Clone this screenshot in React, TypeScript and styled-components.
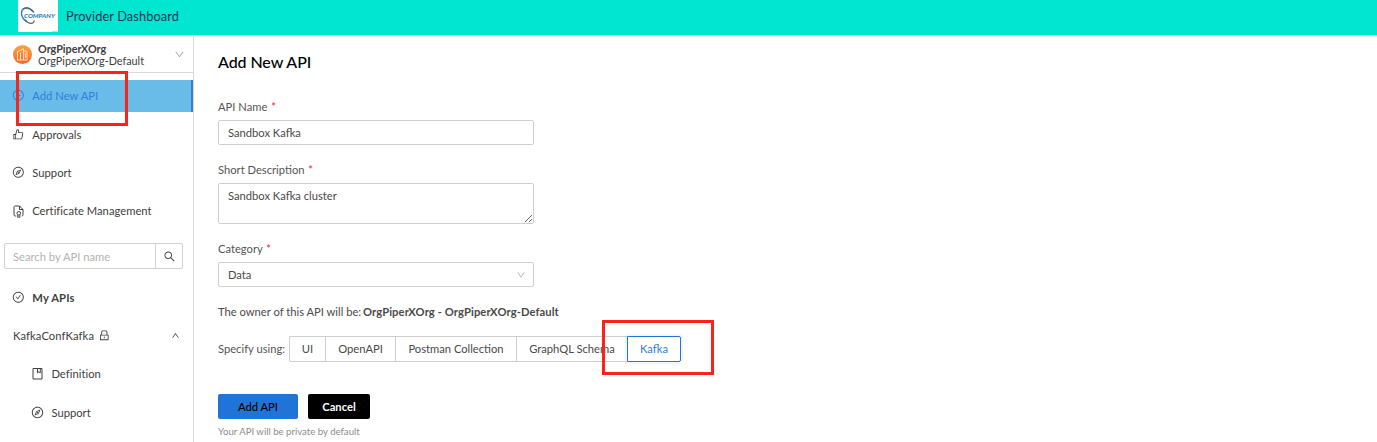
import React from "react";
import styled, { createGlobalStyle, css } from "styled-components";
import {
  AiOutlinePlusCircle,
  AiOutlineLike,
  AiOutlineCompass,
  AiOutlineCheckCircle,
  AiOutlineLock,
  AiOutlineSearch,
  AiOutlineUp,
  AiOutlineDown,
} from "react-icons/ai";

const GlobalStyle = createGlobalStyle`
  * { box-sizing: border-box; }
  body {
    margin: 0;
    background: #fff;
    color: #4a4a4a;
    font-family: Lato, "Liberation Sans", sans-serif;
    font-size: 11.2px;
    overflow: hidden;
  }
  input, textarea, button { font: inherit; color: inherit; outline: none; }
  svg { display: block; flex: none; }
`;

const Page = styled.div`
  display: flex;
  flex-direction: column;
  height: 442px;
  overflow: hidden;
`;

const Header = styled.header`
  display: flex;
  align-items: center;
  height: 36px;
  padding: 0 0 4px 18px;
  background: #00e6d0;
  border-bottom: 1px solid #e4e8e8;
  flex: none;
`;

const LogoBox = styled.div`
  width: 40px;
  height: 32px;
  background: #fff;
`;

const AppName = styled.div`
  margin-left: 8px;
  padding-top: 1px;
  font-size: 12.8px;
  letter-spacing: 0.1px;
  line-height: 20px;
  color: #103a55;
`;

const Body = styled.div`
  display: flex;
  flex: 1;
  min-height: 0;
`;

const Sidebar = styled.aside`
  width: 194px;
  flex: none;
  border-right: 1px solid #d9d9d9;
`;

const Org = styled.div`
  display: flex;
  align-items: center;
  height: 37px;
  padding: 1px 8px 0 13px;
  border-bottom: 1px solid #d9d9d9;
`;

const OrgText = styled.div`
  flex: 1;
  margin-left: 6px;
  font-size: 10.8px;
  line-height: 12px;
  color: #404040;
  strong { display: block; }
`;

const Menu = styled.nav<{ $top: number }>`
  padding-top: ${(p) => p.$top}px;
  display: flex;
  flex-direction: column;
  gap: 6.4px;
`;

const MenuItem = styled.div<{ $active?: boolean; $bold?: boolean; $nested?: boolean }>`
  display: flex;
  align-items: center;
  height: 32px;
  padding: 0 0 0.6px ${(p) => (p.$nested ? 31.4 : 12.2)}px;
  gap: ${(p) => (p.$nested ? 7 : 7.5)}px;
  font-weight: ${(p) => (p.$bold ? 700 : 400)};
  letter-spacing: ${(p) => (p.$bold ? 0.15 : 0.03)}px;
  color: #404040;
  ${(p) =>
    p.$active &&
    css`
      background: #69bbe8;
      color: #2f7fd8;
      border-right: 2px solid #2f7fd8;
    `}
`;

const Search = styled.div`
  display: flex;
  width: 179px;
  height: 26px;
  margin: 16px 0 0 4px;
  border: 1px solid #d2d2d2;
  border-radius: 2px;
`;

const SearchInput = styled.input`
  width: 151px;
  height: 24px;
  padding: 0 8px;
  border: 0;
  border-right: 1px solid #d2d2d2;
  background: none;
  &::placeholder { color: #b2b2b2; opacity: 1; }
`;

const SearchButton = styled.div`
  flex: 1;
  display: flex;
  align-items: center;
  justify-content: center;
`;

const Group = styled.div`
  display: flex;
  align-items: center;
  height: 32px;
  padding: 0 13px 0.6px 13px;
  letter-spacing: 0.1px;
  color: #404040;
  gap: 4px;
  svg:last-child { margin-left: auto; }
`;

const Main = styled.main`
  flex: 1;
  padding: 15px 0 0 24px;
`;

const Title = styled.h1`
  margin: 0 0 25px;
  font-size: 16px;
  font-weight: 500;
  line-height: 22px;
  letter-spacing: -0.08px;
  color: #000;
`;

const Field = styled.div<{ $gap: number }>`
  width: 316px;
  margin-bottom: ${(p) => p.$gap}px;
`;

const Label = styled.label`
  display: block;
  height: 22px;
  line-height: 17px;
  color: #555;
  span { color: #f5222d; margin-left: 1px; }
`;

const control = css`
  display: block;
  width: 316px;
  border: 1px solid #cfcfcf;
  border-radius: 2px;
  background: #fff;
  color: #4a4a4a;
`;

const TextInput = styled.input`
  ${control}
  height: 25px;
  padding: 0 9px 1px;
`;

const TextArea = styled.textarea`
  ${control}
  height: 41px;
  padding: 3px 9px;
  line-height: 17px;
`;

const SelectBox = styled.div`
  ${control}
  display: flex;
  align-items: center;
  justify-content: space-between;
  height: 25px;
  padding: 0 7px 0 9px;
`;

const Owner = styled.p`
  margin: 0 0 15px;
  line-height: 18px;
  strong { margin-left: -1px; letter-spacing: 0.1px; }
`;

const Specify = styled.div`
  display: flex;
  align-items: center;
  height: 26px;
  margin-bottom: 32px;
  color: #555;
`;

const SpecifyLabel = styled.span`
  width: 71px;
  padding-bottom: 1px;
`;

const Segments = styled.div`
  display: flex;
`;

const Segment = styled.div<{ $w: number; $selected?: boolean }>`
  width: ${(p) => p.$w}px;
  height: 26px;
  line-height: 23px;
  text-align: center;
  color: #4a4a4a;
  border: 1px solid #cfcfcf;
  border-right-width: 0;
  &:first-child { border-radius: 2px 0 0 2px; }
  ${(p) =>
    p.$selected &&
    css`
      color: #2f7fd8;
      border: 1px solid #2474d6;
      border-radius: 0 2px 2px 0;
      box-shadow: 0 0 0 2px rgba(36, 116, 214, 0.06);
    `}
`;

const Actions = styled.div`
  display: flex;
  gap: 10px;
`;

const Button = styled.button<{ $primary?: boolean }>`
  width: ${(p) => (p.$primary ? 80 : 62)}px;
  height: 25px;
  padding: 0 0 1px;
  border: 0;
  border-radius: 2px;
  font-weight: ${(p) => (p.$primary ? 500 : 700)};
  background: ${(p) => (p.$primary ? "#2074d8" : "#000")};
  color: ${(p) => (p.$primary ? "#000" : "#fff")};
`;

const Note = styled.div`
  margin-top: 6px;
  font-size: 9.6px;
  line-height: 14px;
  color: #8c8c8c;
`;

const Highlight = styled.div<{ $x: number; $y: number; $w: number; $h: number }>`
  position: absolute;
  left: ${(p) => p.$x}px;
  top: ${(p) => p.$y}px;
  width: ${(p) => p.$w}px;
  height: ${(p) => p.$h}px;
  border: 3px solid #fb2318;
  pointer-events: none;
`;

const Logo = () => (
  <svg width="40" height="32" viewBox="0 0 40 32" fill="none">
    <path d="M15 11.500C10 6 3 7.500 3.500 14C4 18 6 20 9 22" stroke="#2387bd" strokeWidth="1.5" />
    <path d="M5 9C9 6.500 13 9 16 12.500M7 19.500C10 24 15.500 25 16.300 20.500" stroke="#59656d" strokeWidth="1.2" />
    <text x="6" y="17.500" fontSize="4.8" fontWeight="900" fontStyle="italic" fill="#2784b8" textLength="31" lengthAdjust="spacingAndGlyphs">COMPANY</text>
    <path d="M34 31.3h6" stroke="#b5bcbc" strokeWidth="0.8" />
  </svg>
);

const OrgIcon = () => (
  <svg width="19" height="19" viewBox="0 0 19 19" fill="none">
    <defs>
      <linearGradient id="org" x1="0" y1="0" x2="0" y2="1">
        <stop offset="0" stopColor="#fda640" />
        <stop offset="1" stopColor="#f7632a" />
      </linearGradient>
    </defs>
    <circle cx="9.5" cy="9.5" r="9.5" fill="url(#org)" />
    <path d="M4.500 15V6.500L10.500 3.800V15M10.500 5.500l3.500 1V15M4 15h10.500M7.500 7.500V15M12.300 8v5" stroke="#ffe9cf" strokeWidth="0.9" />
  </svg>
);

const CertificateIcon = () => (
  <svg width="12.500" height="14" viewBox="0 0 12.500 14" fill="none" stroke="#404040">
    <path d="M4.200 12H3.200Q2 12 2 10.800V3.200Q2 2 3.200 2H7.500L11 5.500V10.800Q11 12 9.800 12M7.500 2V5.500H11" strokeWidth="1" />
    <circle cx="6.800" cy="9.300" r="1.800" strokeWidth="1" />
    <path d="M5.700 11v2.500l1.100-.7 1.100.7V11" strokeWidth="0.9" />
  </svg>
);

const DefinitionIcon = () => (
  <svg width="13" height="13" viewBox="0 0 13 13" fill="none" stroke="#404040">
    <path d="M2 1.500h9v10.500H2zM6.500 1.500v4.300l1.400-1 1.400 1V1.500" />
  </svg>
);

const segments = [
  { label: "UI", w: 36 },
  { label: "OpenAPI", w: 70 },
  { label: "Postman Collection", w: 121 },
  { label: "GraphQL Schema", w: 111 },
  { label: "Kafka", w: 54, selected: true },
];

export default function App() {
  return (
    <>
      <GlobalStyle />
      <Page>
        <Header>
          <LogoBox><Logo /></LogoBox>
          <AppName>Provider Dashboard</AppName>
        </Header>
        <Body>
          <Sidebar>
            <Org>
              <OrgIcon />
              <OrgText>
                <strong>OrgPiperXOrg</strong>
                OrgPiperXOrg-Default
              </OrgText>
              <AiOutlineDown size={11} color="#a8a8a8" />
            </Org>
            <Menu $top={7}>
              <MenuItem $active><AiOutlinePlusCircle size={12.6} />Add New API</MenuItem>
              <MenuItem><AiOutlineLike size={12.6} />Approvals</MenuItem>
              <MenuItem><AiOutlineCompass size={12.6} />Support</MenuItem>
              <MenuItem><CertificateIcon />Certificate Management</MenuItem>
            </Menu>
            <Search>
              <SearchInput placeholder="Search by API name" />
              <SearchButton><AiOutlineSearch size={13} /></SearchButton>
            </Search>
            <Menu $top={12.3}>
              <MenuItem $bold><AiOutlineCheckCircle size={12.6} />My APIs</MenuItem>
              <Group>
                KafkaConfKafka
                <AiOutlineLock size={12.6} />
                <AiOutlineUp size={9} />
              </Group>
              <MenuItem $nested><DefinitionIcon />Definition</MenuItem>
              <MenuItem $nested><AiOutlineCompass size={13} />Support</MenuItem>
            </Menu>
          </Sidebar>
          <Main>
            <Title>Add New API</Title>
            <Field $gap={16}>
              <Label>API Name <span>*</span></Label>
              <TextInput defaultValue="Sandbox Kafka" />
            </Field>
            <Field $gap={16}>
              <Label>Short Description <span>*</span></Label>
              <TextArea defaultValue="Sandbox Kafka cluster" />
            </Field>
            <Field $gap={16}>
              <Label>Category <span>*</span></Label>
              <SelectBox>Data<AiOutlineDown size={10} color="#a8a8a8" /></SelectBox>
            </Field>
            <Owner>
              The owner of this API will be: <strong>OrgPiperXOrg - OrgPiperXOrg-Default</strong>
            </Owner>
            <Specify>
              <SpecifyLabel>Specify using:</SpecifyLabel>
              <Segments>
                {segments.map((s) => (
                  <Segment key={s.label} $w={s.w} $selected={s.selected}>{s.label}</Segment>
                ))}
              </Segments>
            </Specify>
            <Actions>
              <Button $primary>Add API</Button>
              <Button>Cancel</Button>
            </Actions>
            <Note>Your API will be private by default</Note>
          </Main>
        </Body>
      </Page>
      <Highlight $x={16} $y={71} $w={112} $h={55} />
      <Highlight $x={602} $y={320} $w={112} $h={55} />
    </>
  );
}
